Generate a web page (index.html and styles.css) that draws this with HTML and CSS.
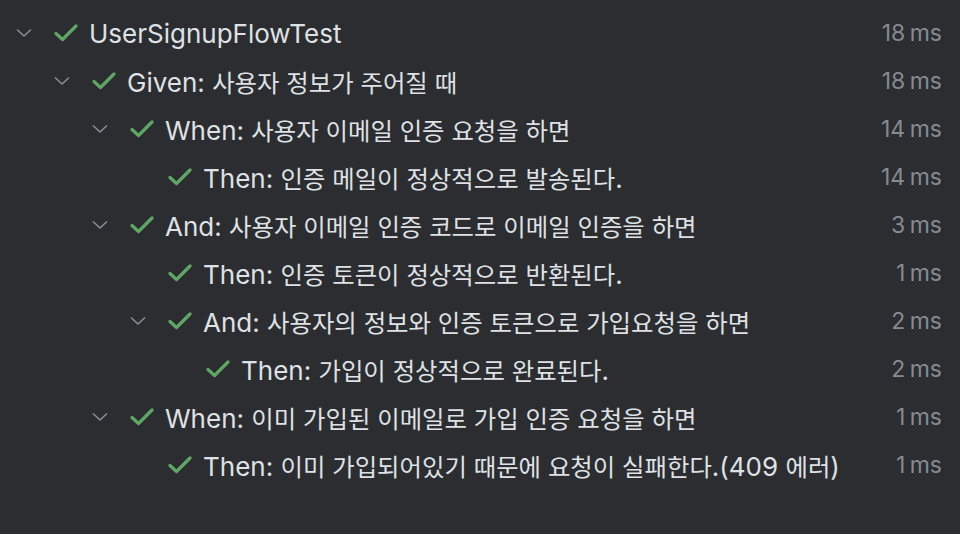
FILE: index.html
```html
<!DOCTYPE html>
<html lang="ko">
<head>
<meta charset="utf-8">
<link rel="stylesheet" href="styles.css">
</head>
<body>
<div class="tree">
  <div class="row l0"><span class="chev"><svg viewBox="0 0 16 8"><path d="M1.5 1 L8 7 L14.5 1"/></svg></span><span class="chk"><svg viewBox="0 0 24 18"><path d="M2 9.5 L8.5 15.5 L22 2"/></svg></span><span class="label">UserSignupFlowTest</span><span class="time">18 ms</span></div>
  <div class="row l1"><span class="chev"><svg viewBox="0 0 16 8"><path d="M1.5 1 L8 7 L14.5 1"/></svg></span><span class="chk"><svg viewBox="0 0 24 18"><path d="M2 9.5 L8.5 15.5 L22 2"/></svg></span><span class="label">Given: <span class="ko">사용자 정보가 주어질 때</span></span><span class="time">18 ms</span></div>
  <div class="row l2"><span class="chev"><svg viewBox="0 0 16 8"><path d="M1.5 1 L8 7 L14.5 1"/></svg></span><span class="chk"><svg viewBox="0 0 24 18"><path d="M2 9.5 L8.5 15.5 L22 2"/></svg></span><span class="label">When: <span class="ko">사용자 이메일 인증 요청을 하면</span></span><span class="time">14 ms</span></div>
  <div class="row l3"><span class="leaf"></span><span class="chk"><svg viewBox="0 0 24 18"><path d="M2 9.5 L8.5 15.5 L22 2"/></svg></span><span class="label">Then: <span class="ko">인증 메일이 정상적으로 발송된다</span>.</span><span class="time">14 ms</span></div>
  <div class="row l2"><span class="chev"><svg viewBox="0 0 16 8"><path d="M1.5 1 L8 7 L14.5 1"/></svg></span><span class="chk"><svg viewBox="0 0 24 18"><path d="M2 9.5 L8.5 15.5 L22 2"/></svg></span><span class="label">And: <span class="ko">사용자 이메일 인증 코드로 이메일 인증을 하면</span></span><span class="time">3 ms</span></div>
  <div class="row l3"><span class="leaf"></span><span class="chk"><svg viewBox="0 0 24 18"><path d="M2 9.5 L8.5 15.5 L22 2"/></svg></span><span class="label">Then: <span class="ko">인증 토큰이 정상적으로 반환된다</span>.</span><span class="time">1 ms</span></div>
  <div class="row l3"><span class="chev"><svg viewBox="0 0 16 8"><path d="M1.5 1 L8 7 L14.5 1"/></svg></span><span class="chk"><svg viewBox="0 0 24 18"><path d="M2 9.5 L8.5 15.5 L22 2"/></svg></span><span class="label">And: <span class="ko">사용자의 정보와 인증 토큰으로 가입요청을 하면</span></span><span class="time">2 ms</span></div>
  <div class="row l4"><span class="leaf"></span><span class="chk"><svg viewBox="0 0 24 18"><path d="M2 9.5 L8.5 15.5 L22 2"/></svg></span><span class="label">Then: <span class="ko">가입이 정상적으로 완료된다</span>.</span><span class="time">2 ms</span></div>
  <div class="row l2"><span class="chev"><svg viewBox="0 0 16 8"><path d="M1.5 1 L8 7 L14.5 1"/></svg></span><span class="chk"><svg viewBox="0 0 24 18"><path d="M2 9.5 L8.5 15.5 L22 2"/></svg></span><span class="label">When: <span class="ko">이미 가입된 이메일로 가입 인증 요청을 하면</span></span><span class="time">1 ms</span></div>
  <div class="row l3"><span class="leaf"></span><span class="chk"><svg viewBox="0 0 24 18"><path d="M2 9.5 L8.5 15.5 L22 2"/></svg></span><span class="label">Then: <span class="ko">이미 가입되어있기 때문에 요청이 실패한다</span>.(409 <span class="ko">에러</span>)</span><span class="time">1 ms</span></div>
</div>
</body>
</html>
```
FILE: styles.css
```css
html, body {
  margin: 0;
  padding: 0;
  background: #2b2d30;
  width: 960px;
  height: 534px;
  overflow: hidden;
}
.tree {
  display: flex;
  flex-direction: column;
  padding-top: 9px;
  font-family: Inter, "Noto Sans CJK KR", sans-serif;
}
.row {
  display: flex;
  align-items: center;
  height: 48px;
  padding-right: 18px;
}
.l0 { padding-left: 16px; }
.l1 { padding-left: 54px; }
.l2 { padding-left: 92px; }
.l3 { padding-left: 130px; }
.l4 { padding-left: 168px; }
.chev, .leaf {
  width: 16px;
  height: 8px;
  margin-right: 22px;
  display: flex;
}
.chev svg {
  width: 16px;
  height: 8px;
  fill: none;
  stroke: #8b8e94;
  stroke-width: 1.6;
  stroke-linecap: round;
  stroke-linejoin: round;
}
.chk {
  width: 24px;
  height: 18px;
  display: flex;
  margin-right: 11px;
}
.chk svg {
  width: 24px;
  height: 18px;
  fill: none;
  stroke: #5fa764;
  stroke-width: 3.2;
  stroke-linecap: round;
  stroke-linejoin: round;
}
.label {
  color: #dfe1e5;
  font-size: 26px;
  white-space: nowrap;
  flex: 1;
}
.ko {
  font-size: 24.4px;
}
.time {
  color: #868a91;
  font-size: 23px;
  word-spacing: -2px;
  white-space: nowrap;
}
```
